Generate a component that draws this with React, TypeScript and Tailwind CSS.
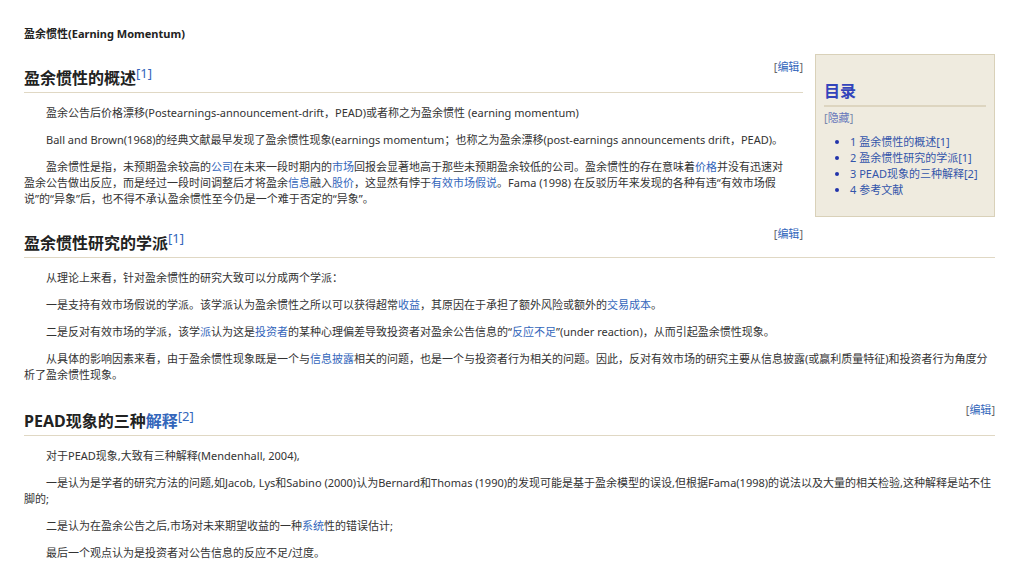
export default function App() {
  const a = "text-[#3366bb]"
  const Edit = ({ className = "" }: { className?: string }) => (
    <div className={"text-right text-[11px] leading-[14px] " + className}>
      <span className="text-[#666]">[</span>
      <span className={a}>编辑</span>
      <span className="text-[#666]">]</span>
    </div>
  )
  const P = ({ children }: { children: React.ReactNode }) => (
    <p className="indent-[22px] mb-[11px]">{children}</p>
  )
  const H = ({ children, ref1 }: { children: React.ReactNode; ref1: string }) => (
    <h2 className="text-[16px] font-bold leading-[20px] text-[#222] border-b border-[#e0d8c4] pb-[4px] mb-[12px]">
      {children}
      <sup className={"text-[13px] font-normal " + a}>[{ref1}]</sup>
    </h2>
  )
  return (
    <div
      className="w-[1024px] h-[574px] overflow-hidden bg-white text-[#333] text-[11px] leading-[16px] pl-6 pr-[29px] pt-[26px]"
      style={{ fontFamily: '"Noto Sans", "Noto Sans CJK SC", sans-serif' }}
    >
      <div className="font-bold text-[#222] mb-[18px]">盈余惯性(Earning Momentum)</div>
      <div className="flex">
        <div className="flex-1">
          <Edit className="mb-[-6px]" />
          <H ref1="1">盈余惯性的概述</H>
          <P>盈余公告后价格漂移(Postearnings-announcement-drift，PEAD)或者称之为盈余惯性 (earning momentum)</P>
          <P>Ball and Brown(1968)的经典文献最早发现了盈余惯性现象(earnings momentum；也称之为盈余漂移(post-earnings announcements drift，PEAD)。</P>
          <p className="indent-[22px] pr-[10px]">
            盈余惯性是指，未预期盈余较高的<span className={a}>公司</span>在未来一段时期内的<span className={a}>市场</span>回报会显著地高于那些未预期盈余较低的公司。盈余惯性的存在意味着<span className={a}>价格</span>并没有迅速对盈余公告做出反应，而是经过一段时间调整后才将盈余<span className={a}>信息</span>融入<span className={a}>股价</span>，这显然有悖于<span className={a}>有效市场假说</span>。Fama (1998) 在反驳历年来发现的各种有违“有效市场假说”的“异象”后，也不得不承认盈余惯性至今仍是一个难于否定的“异象”。
          </p>
        </div>
        <div className="w-[180px] ml-[12px] mt-[-6px] h-[163px] bg-[#efebdf] border border-[#d9d1b9] px-[8px] pt-[26px]">
          <div className="text-[16px] font-bold text-[#3344bb] leading-[20px] pb-[4px] border-b-2 border-[#ddd5c0]">目录</div>
          <div className="mt-[3px] text-[#7788aa]">[<span className="text-[#6677bb]">隐藏</span>]</div>
          <ul className="mt-[8px] ml-[26px] list-disc text-[#3355aa] marker:text-[#2233aa]">
            <li>1 盈余惯性的概述[1]</li>
            <li>2 盈余惯性研究的学派[1]</li>
            <li>3 PEAD现象的三种解释[2]</li>
            <li>4 参考文献</li>
          </ul>
        </div>
      </div>
      <Edit className="mt-[10px] mr-[192px] mb-[-8px]" />
      <H ref1="1">盈余惯性研究的学派</H>
      <P>从理论上来看，针对盈余惯性的研究大致可以分成两个学派：</P>
      <P>一是支持有效市场假说的学派。该学派认为盈余惯性之所以可以获得超常<span className={a}>收益</span>，其原因在于承担了额外风险或额外的<span className={a}>交易成本</span>。</P>
      <P>二是反对有效市场的学派，该学<span className={a}>派</span>认为这是<span className={a}>投资者</span>的某种心理偏差导致投资者对盈余公告信息的“<span className={a}>反应不足</span>”(under reaction)，从而引起盈余惯性现象。</P>
      <P>从具体的影响因素来看，由于盈余惯性现象既是一个与<span className={a}>信息披露</span>相关的问题，也是一个与投资者行为相关的问题。因此，反对有效市场的研究主要从信息披露(或赢利质量特征)和投资者行为角度分析了盈余惯性现象。</P>
      <Edit className="mt-[20px] mb-[-6px]" />
      <H ref1="2">PEAD现象的三种<span className={a}>解释</span></H>
      <P>对于PEAD现象,大致有三种解释(Mendenhall, 2004),</P>
      <P>一是认为是学者的研究方法的问题,如Jacob, Lys和Sabino (2000)认为Bernard和Thomas (1990)的发现可能是基于盈余模型的误设,但根据Fama(1998)的说法以及大量的相关检验,这种解释是站不住脚的;</P>
      <P>二是认为在盈余公告之后,市场对未来期望收益的一种<span className={a}>系统</span>性的错误估计;</P>
      <P>最后一个观点认为是投资者对公告信息的反应不足/过度。</P>
    </div>
  )
}
